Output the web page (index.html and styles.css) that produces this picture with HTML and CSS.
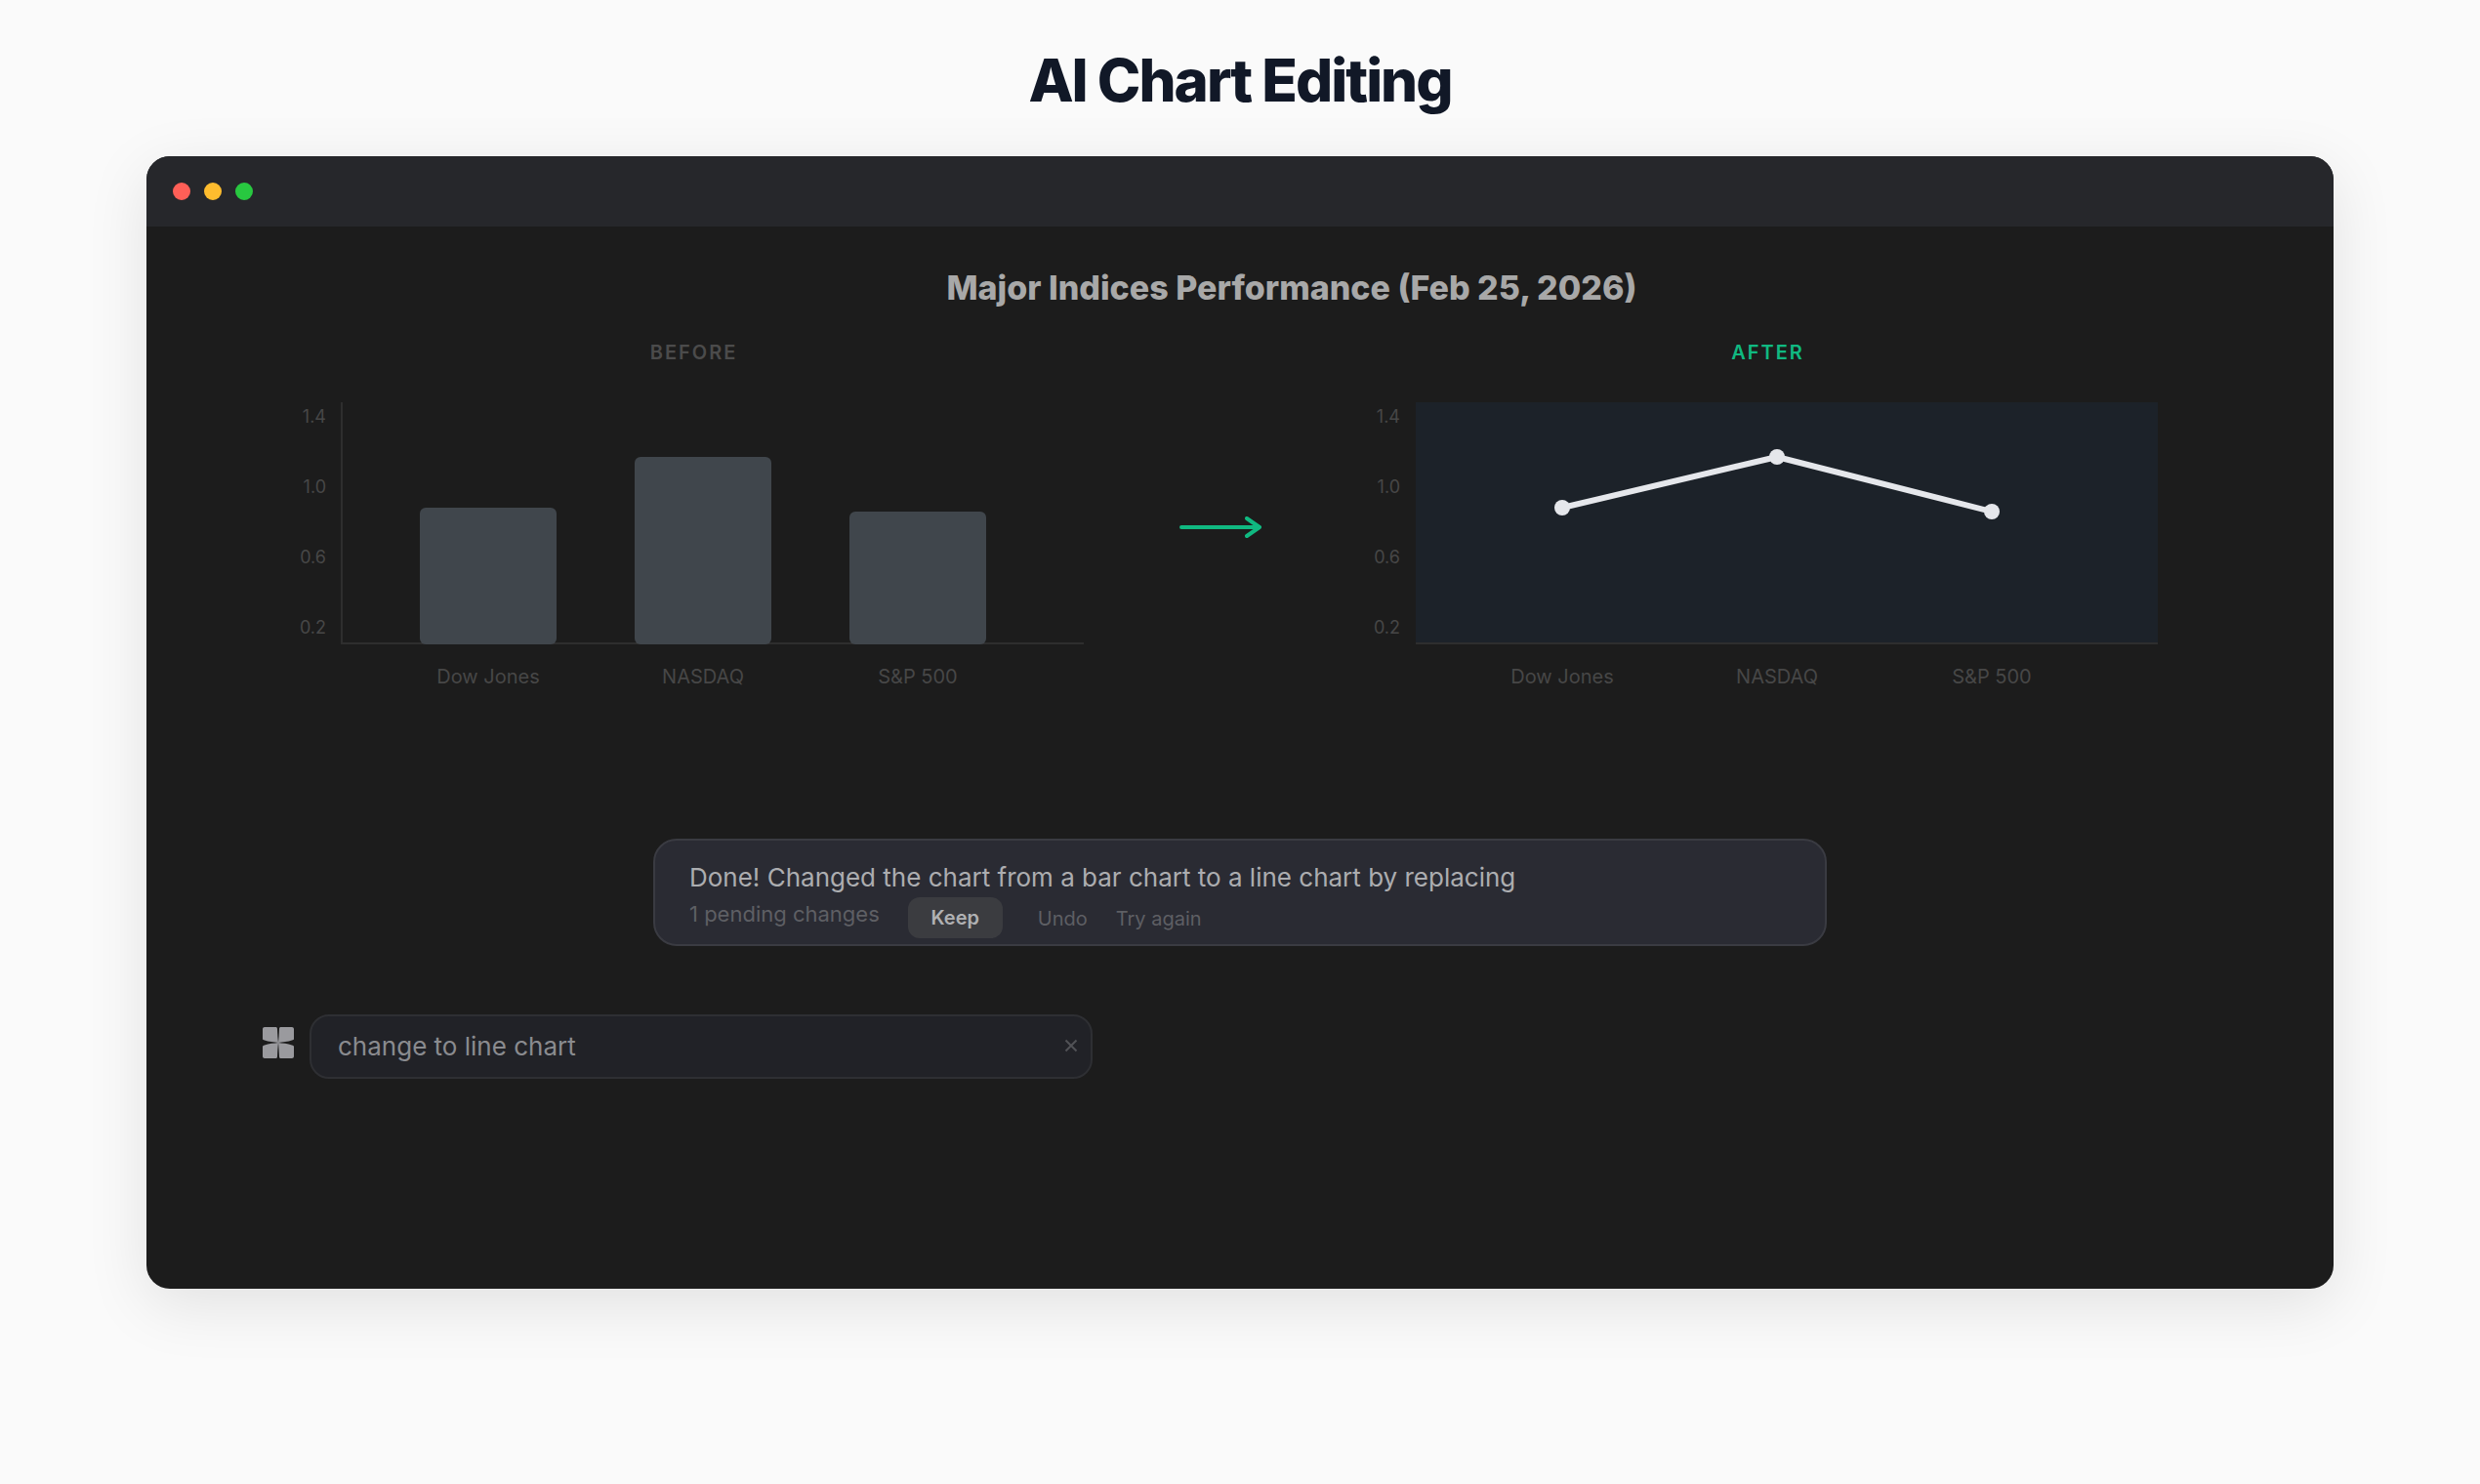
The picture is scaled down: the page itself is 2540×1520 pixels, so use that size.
FILE: index.html
```html
<!DOCTYPE html>
<html lang="en">
<head>
<meta charset="utf-8">
<title>AI Chart Editing</title>
<link rel="stylesheet" href="styles.css">
</head>
<body>
<h1 class="page-title">AI Chart Editing</h1>
<div class="window">
  <div class="titlebar">
    <span class="dot dot-red"></span>
    <span class="dot dot-yellow"></span>
    <span class="dot dot-green"></span>
  </div>
  <div class="window-body">
    <section class="chart-section">
      <h2 class="chart-title">Major Indices Performance (Feb 25, 2026)</h2>
      <div class="compare">
        <figure class="panel panel-before">
          <figcaption class="panel-label label-before">BEFORE</figcaption>
          <svg class="chart" width="860" height="320" viewBox="0 0 860 320">
            <g class="tick">
              <text x="64" y="47">1.4</text>
              <text x="64" y="119">1.0</text>
              <text x="64" y="191">0.6</text>
              <text x="64" y="263">0.2</text>
            </g>
            <line class="axis" x1="80" y1="26" x2="80" y2="274"/>
            <line class="axis" x1="80" y1="273" x2="840" y2="273"/>
            <rect class="bar" x="160" y="134" width="140" height="140" rx="6"/>
            <rect class="bar" x="380" y="82" width="140" height="192" rx="6"/>
            <rect class="bar" x="600" y="138" width="140" height="136" rx="6"/>
            <g class="cat">
              <text x="230" y="314">Dow Jones</text>
              <text x="450" y="314">NASDAQ</text>
              <text x="670" y="314">S&amp;P 500</text>
            </g>
          </svg>
        </figure>
        <svg class="arrow" width="84" height="22" viewBox="0 0 84 22">
          <path d="M2 11H82M69 2L82 11L69 20"/>
        </svg>
        <figure class="panel panel-after">
          <figcaption class="panel-label label-after">AFTER</figcaption>
          <svg class="chart" width="860" height="320" viewBox="0 0 860 320">
            <g class="tick">
              <text x="64" y="47">1.4</text>
              <text x="64" y="119">1.0</text>
              <text x="64" y="191">0.6</text>
              <text x="64" y="263">0.2</text>
            </g>
            <rect class="plot" x="80" y="26" width="760" height="248"/>
            <line class="axis" x1="80" y1="273" x2="840" y2="273"/>
            <polyline class="line" points="230,134 450,82 670,138"/>
            <circle class="point" cx="230" cy="134" r="8"/>
            <circle class="point" cx="450" cy="82" r="8"/>
            <circle class="point" cx="670" cy="138" r="8"/>
            <g class="cat">
              <text x="230" y="314">Dow Jones</text>
              <text x="450" y="314">NASDAQ</text>
              <text x="670" y="314">S&amp;P 500</text>
            </g>
          </svg>
        </figure>
      </div>
    </section>
    <div class="toast">
      <p class="toast-msg">Done! Changed the chart from a bar chart to a line chart by replacing</p>
      <div class="toast-row">
        <span class="pending">1 pending changes</span>
        <span class="btn-keep">Keep</span>
        <span class="btn-link btn-undo">Undo</span>
        <span class="btn-link">Try again</span>
      </div>
    </div>
    <div class="prompt-row">
      <svg class="prompt-icon" width="32" height="32" viewBox="0 0 32 32">
        <path d="M2 0H13.800C14.700 0 14.900 1 15 2C15.200 7 15.500 12 16 16C12 15.500 6 15 2 13.600C1 13.300 0 13 0 12V2C0 .9 .9 0 2 0Z"/>
        <path transform="matrix(-1 0 0 1 32 0)" d="M2 0H13.800C14.700 0 14.900 1 15 2C15.200 7 15.500 12 16 16C12 15.500 6 15 2 13.600C1 13.300 0 13 0 12V2C0 .9 .9 0 2 0Z"/>
        <path transform="matrix(1 0 0 -1 0 32)" d="M2 0H13.800C14.700 0 14.900 1 15 2C15.200 7 15.500 12 16 16C12 15.500 6 15 2 13.600C1 13.300 0 13 0 12V2C0 .9 .9 0 2 0Z"/>
        <path transform="matrix(-1 0 0 -1 32 32)" d="M2 0H13.800C14.700 0 14.900 1 15 2C15.200 7 15.500 12 16 16C12 15.500 6 15 2 13.600C1 13.300 0 13 0 12V2C0 .9 .9 0 2 0Z"/>
      </svg>
      <div class="prompt-input">
        <span class="prompt-text">change to line chart</span>
        <svg class="prompt-clear" width="14" height="14" viewBox="0 0 14 14">
          <path d="M1.500 1.500L12.500 12.500M12.500 1.500L1.500 12.500"/>
        </svg>
      </div>
    </div>
  </div>
</div>
</body>
</html>
```
FILE: styles.css
```css
* { box-sizing: border-box; }
html, body { margin: 0; padding: 0; }
body {
  background: #fafafa;
  font-family: Inter, "Liberation Sans", sans-serif;
  height: 1520px;
  overflow: hidden;
}
.page-title {
  margin: 0;
  height: 160px;
  padding-top: 44px;
  text-align: center;
  font-size: 60px;
  line-height: 76px;
  font-weight: 800;
  letter-spacing: -2px;
  color: #111827;
}
.window {
  width: 2240px;
  height: 1160px;
  margin: 0 auto;
  border-radius: 24px;
  background: #1c1c1c;
  box-shadow: 0 16px 64px rgba(0, 0, 0, .1);
  display: flex;
  flex-direction: column;
}
.titlebar {
  height: 72px;
  flex: none;
  display: flex;
  align-items: center;
  gap: 14px;
  padding: 0 27px;
  background: #26272b;
  border-radius: 24px 24px 0 0;
}
.dot { width: 18px; height: 18px; border-radius: 50%; }
.dot-red { background: #ff5f57; }
.dot-yellow { background: #febc2e; }
.dot-green { background: #28c840; }
.window-body { flex: 1; display: flex; flex-direction: column; }
.chart-section { padding-left: 106px; padding-top: 40px; }
.chart-title {
  margin: 0;
  text-align: center;
  font-size: 34px;
  line-height: 46px;
  font-weight: 800;
  color: #a8a8a8;
}
.compare {
  display: flex;
  align-items: flex-start;
  padding-left: 14px;
  margin-top: 31px;
}
.panel { margin: 0; width: 860px; flex: none; }
.panel-label {
  font-size: 20px;
  line-height: 24px;
  font-weight: 600;
  letter-spacing: 2px;
  text-align: center;
}
.label-before { color: #4b4b4b; width: 881px; }
.label-after { color: #10b981; width: 881px; }
.panel-after { margin-left: 78px; }
.chart { display: block; margin-top: 13px; overflow: visible; }
.arrow { flex: none; margin: 180px 0 0 78px; }
.arrow path { fill: none; stroke: #10b981; stroke-width: 4; stroke-linecap: round; stroke-linejoin: round; }
.tick text { font-size: 18px; fill: #474747; text-anchor: end; }
.cat text { font-size: 20px; fill: #474747; text-anchor: middle; }
.axis { stroke: #2e2e2e; stroke-width: 2; }
.bar { fill: #40464c; }
.plot { fill: #1c2229; }
.line { fill: none; stroke: #e5e7eb; stroke-width: 6; stroke-linejoin: round; }
.point { fill: #e5e7eb; }
.toast {
  width: 1202px;
  height: 110px;
  margin: 153px auto 0;
  padding: 20px 35px 0;
  background: #2a2b33;
  border: 2px solid #3a3b42;
  border-radius: 24px;
  flex: none;
}
.toast-msg { margin: 0; font-size: 26px; line-height: 36px; color: #acadb0; }
.toast-row { display: flex; align-items: center; height: 42px; margin-top: 2px; }
.pending { font-size: 22px; line-height: 30px; color: #5e5f64; margin-top: -8px; }
.btn-keep {
  width: 97px;
  height: 42px;
  margin-left: 29px;
  border-radius: 12px;
  background: #3b3c40;
  color: #b0b1b3;
  font-size: 20px;
  font-weight: 600;
  display: flex;
  align-items: center;
  justify-content: center;
}
.btn-link { font-size: 20px; color: #5e5f64; padding-top: 2px; }
.btn-undo { margin: 0 29px 0 36px; }
.prompt-row {
  display: flex;
  align-items: flex-start;
  gap: 16px;
  margin: 70px 0 0 119px;
}
.prompt-icon { flex: none; margin-top: 13px; }
.prompt-icon path { fill: #9a9a9e; }
.prompt-input {
  width: 802px;
  height: 66px;
  padding: 0 13px 2px 27px;
  display: flex;
  align-items: center;
  justify-content: space-between;
  background: #212227;
  border: 2px solid #2e2f33;
  border-radius: 20px;
}
.prompt-text { font-size: 26px; color: #8a8b8f; }
.prompt-clear path { stroke: #515256; stroke-width: 2; fill: none; }
```
